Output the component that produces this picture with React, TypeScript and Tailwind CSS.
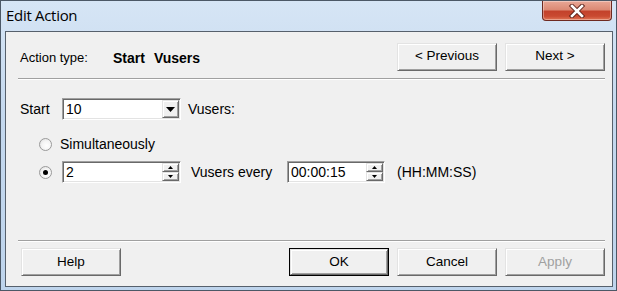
import React from "react";

const btnFace =
  "bg-[#f0f0f0] border border-t-[#e3e3e3] border-l-[#e3e3e3] border-r-[#696969] border-b-[#696969] shadow-[inset_1px_1px_0_#ffffff,inset_-1px_-1px_0_#a0a0a0]";

function Btn({ label, def = false, disabled = false }: { label: string; def?: boolean; disabled?: boolean }) {
  if (def) {
    return (
      <div className="w-[100px] h-[28px] border border-black flex">
        <div className={`flex-1 flex items-center justify-center ${btnFace}`}>
          <span className="text-[13.5px] text-black">{label}</span>
        </div>
      </div>
    );
  }
  return (
    <div className={`w-[100px] h-[28px] flex items-center justify-center ${btnFace}`}>
      <span className={disabled ? "text-[13.5px] text-[#a0a0a0]" : "text-[13.5px] text-black"}>{label}</span>
    </div>
  );
}

const sunken =
  "bg-white border border-t-[#a0a0a0] border-l-[#a0a0a0] border-r-white border-b-white shadow-[inset_1px_1px_0_#696969,inset_-1px_-1px_0_#e3e3e3]";

function Spinner() {
  return (
    <div className="flex flex-col w-[17px] h-[18px] my-[1px] mr-[1px]">
      <div className={`flex-1 flex items-center justify-center ${btnFace}`}>
        <svg width="5" height="3" viewBox="0 0 5 3">
          <polygon points="2.5,0 5,3 0,3" fill="#000" />
        </svg>
      </div>
      <div className={`flex-1 flex items-center justify-center ${btnFace}`}>
        <svg width="5" height="3" viewBox="0 0 5 3">
          <polygon points="0,0 5,0 2.5,3" fill="#000" />
        </svg>
      </div>
    </div>
  );
}

function Radio({ checked }: { checked: boolean }) {
  return (
    <div className="w-[13px] h-[13px] rounded-full border border-[#9a9a9a] bg-[radial-gradient(circle_at_60%_60%,#ffffff_0%,#f4f4f4_50%,#d8d8d8_100%)] flex items-center justify-center">
      {checked && <div className="w-[5px] h-[5px] rounded-full bg-black" />}
    </div>
  );
}

export default function App() {
  return (
    <div className="w-[617px] h-[291px] border border-[#4c5866] bg-[linear-gradient(180deg,#d6e5f5_0%,#c4d8ee_40%,#bed4ec_100%)] flex flex-col font-['Liberation_Sans',Arial,sans-serif] text-black overflow-hidden">
      {/* title bar */}
      <div className="h-[30px] flex items-start justify-between">
        <div className="h-[30px] flex items-center pl-[5px] pb-[1px]">
          <span className="text-[15px] font-['Open_Sans',sans-serif] text-black tracking-[-0.3px]">Edit Action</span>
        </div>
        <div className="mr-[4px] w-[70px] h-[20px] rounded-b-[4px] border border-t-0 border-[#6e2a20] bg-[linear-gradient(180deg,#e9a796_0%,#dc8a75_45%,#c3422b_55%,#c94a31_80%,#e07656_100%)] flex items-center justify-center shadow-[inset_0_0_0_1px_rgba(255,255,255,0.35)]">
          <svg width="18" height="14" viewBox="0 0 18 14">
            <path d="M4 2 L14 12 M14 2 L4 12" stroke="#5a1f16" strokeWidth="4.4" strokeLinecap="square" />
            <path d="M4 2 L14 12 M14 2 L4 12" stroke="#ffffff" strokeWidth="2.6" strokeLinecap="square" />
          </svg>
        </div>
      </div>
      {/* client */}
      <div className="pl-[4px] pr-[3px]">
        <div className="h-[256px] border border-[#56606c] bg-[#f0f0f0] flex flex-col text-[14px]">
          {/* top row */}
          <div className="mt-[10px] h-[29px] flex items-center pl-[14px] pr-[7px]">
            <span className="w-[93px] text-[13px] pt-[3px]">Action type:</span>
            <span className="font-bold text-[14px] pt-[3px]">Start</span>
            <span className="font-bold text-[14px] ml-[9px] pt-[3px]">Vusers</span>
            <div className="flex-1" />
            <div className="flex gap-[8px]">
              <Btn label="< Previous" />
              <Btn label="Next >" />
            </div>
          </div>
          <div className="mt-[7px] ml-[12px] mr-[7px] h-[2px] border-t border-t-[#a0a0a0] border-b border-b-white" />
          {/* start row */}
          <div className="mt-[18px] h-[22px] flex items-center pl-[14px]">
            <span className="w-[42px]">Start</span>
            <div className={`w-[119px] h-[22px] flex items-center ${sunken}`}>
              <span className="flex-1 pl-[3px]">10</span>
              <div className={`w-[17px] h-[18px] mr-[1px] flex items-center justify-center ${btnFace}`}>
                <svg width="9" height="5" viewBox="0 0 9 5">
                  <polygon points="0,0 9,0 4.5,5" fill="#000" />
                </svg>
              </div>
            </div>
            <span className="ml-[7px]">Vusers:</span>
          </div>
          {/* radio 1 */}
          <div className="mt-[16px] h-[16px] flex items-center pl-[33px]">
            <Radio checked={false} />
            <span className="ml-[8px]">Simultaneously</span>
          </div>
          {/* radio 2 */}
          <div className="mt-[9px] h-[22px] flex items-center pl-[33px]">
            <Radio checked={true} />
            <div className={`ml-[10px] w-[119px] h-[22px] flex items-center ${sunken}`}>
              <span className="flex-1 pl-[3px]">2</span>
              <Spinner />
            </div>
            <span className="ml-[10px] w-[96px]">Vusers every</span>
            <div className={`w-[98px] h-[22px] flex items-center ${sunken}`}>
              <span className="flex-1 pl-[3px]">00:00:15</span>
              <Spinner />
            </div>
            <span className="ml-[12px]">(HH:MM:SS)</span>
          </div>
          <div className="flex-1" />
          <div className="ml-[12px] mr-[7px] h-[2px] border-t border-t-[#a0a0a0] border-b border-b-white" />
          <div className="mt-[6px] mb-[10px] h-[28px] flex items-center pl-[15px] pr-[7px]">
            <Btn label="Help" />
            <div className="flex-1" />
            <div className="flex gap-[8px]">
              <Btn label="OK" def />
              <Btn label="Cancel" />
              <Btn label="Apply" disabled />
            </div>
          </div>
        </div>
      </div>
    </div>
  );
}
